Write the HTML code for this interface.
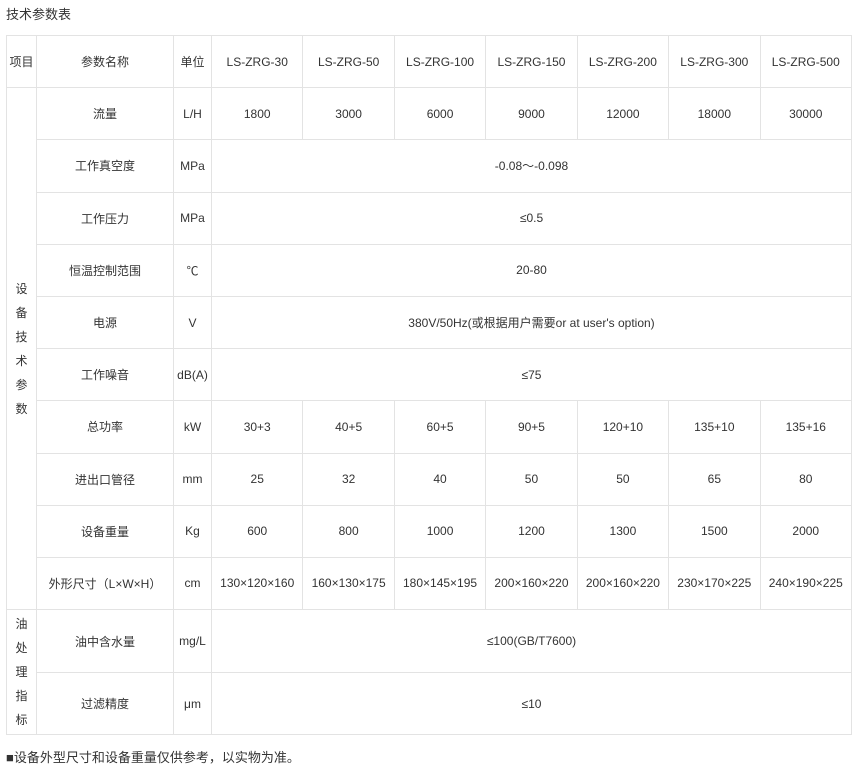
<!DOCTYPE html>
<html><head><meta charset="utf-8"><style>
body{margin:0;background:#fff;font-family:"Liberation Sans","Noto Sans CJK SC",sans-serif;color:#333;font-size:12px;}
.t{position:absolute;left:6px;top:4px;font-size:13px;color:#333;}
table{position:absolute;left:6px;top:35px;border-collapse:collapse;table-layout:fixed;width:846px;}
td{border:1px solid #e3e3e3;text-align:center;vertical-align:middle;padding:0;height:51.2px;font-size:12px;color:#333;}
.v{line-height:24px;}
.f{position:absolute;left:6px;top:747px;font-size:13px;color:#333;}
</style></head><body>
<div class="t">技术参数表</div>
<table>
<colgroup><col style="width:30px"><col style="width:137px"><col style="width:38px"><col><col><col><col><col><col><col></colgroup>
<tr><td>项目</td><td>参数名称</td><td>单位</td><td>LS-ZRG-30</td><td>LS-ZRG-50</td><td>LS-ZRG-100</td><td>LS-ZRG-150</td><td>LS-ZRG-200</td><td>LS-ZRG-300</td><td>LS-ZRG-500</td></tr>
<tr><td rowspan="10" class="v">设<br>备<br>技<br>术<br>参<br>数</td><td>流量</td><td>L/H</td><td>1800</td><td>3000</td><td>6000</td><td>9000</td><td>12000</td><td>18000</td><td>30000</td></tr>
<tr><td>工作真空度</td><td>MPa</td><td colspan="7">-0.08～-0.098</td></tr>
<tr><td>工作压力</td><td>MPa</td><td colspan="7">≤0.5</td></tr>
<tr><td>恒温控制范围</td><td>℃</td><td colspan="7">20-80</td></tr>
<tr><td>电源</td><td>V</td><td colspan="7">380V/50Hz(或根据用户需要or at user's option)</td></tr>
<tr><td>工作噪音</td><td>dB(A)</td><td colspan="7">≤75</td></tr>
<tr><td>总功率</td><td>kW</td><td>30+3</td><td>40+5</td><td>60+5</td><td>90+5</td><td>120+10</td><td>135+10</td><td>135+16</td></tr>
<tr><td>进出口管径</td><td>mm</td><td>25</td><td>32</td><td>40</td><td>50</td><td>50</td><td>65</td><td>80</td></tr>
<tr><td>设备重量</td><td>Kg</td><td>600</td><td>800</td><td>1000</td><td>1200</td><td>1300</td><td>1500</td><td>2000</td></tr>
<tr><td>外形尺寸（L×W×H）</td><td>cm</td><td>130×120×160</td><td>160×130×175</td><td>180×145×195</td><td>200×160×220</td><td>200×160×220</td><td>230×170×225</td><td>240×190×225</td></tr>
<tr><td rowspan="2" class="v">油<br>处<br>理<br>指<br>标</td><td style="height:62px">油中含水量</td><td>mg/L</td><td colspan="7">≤100(GB/T7600)</td></tr>
<tr><td style="height:61px">过滤精度</td><td>μm</td><td colspan="7">≤10</td></tr>
</table>
<div class="f">■设备外型尺寸和设备重量仅供参考，以实物为准。</div>
</body></html>
